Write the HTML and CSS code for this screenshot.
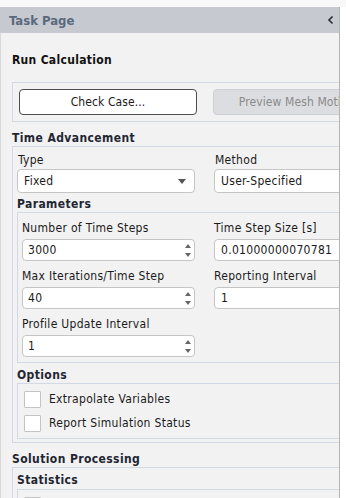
FILE: index.html
```
<!DOCTYPE html>
<html lang="en">

<head>
    <meta charset="UTF-8">
    <meta name="viewport" content="width=device-width, initial-scale=1.0">
    <title>Task Page</title>

    <link rel="stylesheet" href="styles.css">
</head>

<body>

    <div class="top-strip"></div>

    <div class="task-panel">
        <!-- Panel Header -->
        <div class="panel-head">
            <span class="panel-head-title">Task Page</span>
            <svg class="collapse-icon" width="8" height="10" viewBox="0 0 8 10">
                <polyline points="5.5,1.5 2,5 5.5,8.5" fill="none" stroke="#2b2b2b" stroke-width="1.6" />
            </svg>
        </div>

        <div class="panel-body">
            <div class="panel-inner">
                <h2 class="page-title">Run Calculation</h2>

                <!-- Top Buttons -->
                <div class="btn-group">
                    <button class="btn">Check Case...</button>
                    <button class="btn btn-disabled">Preview Mesh Motion...</button>
                </div>

                <!-- Time Advancement -->
                <h3 class="group-title">Time Advancement</h3>
                <div class="group time-group">
                    <div class="two-col">
                        <div class="field">
                            <label>Type</label>
                            <div class="select">
                                <span>Fixed</span>
                                <svg width="8" height="5" viewBox="0 0 8 5"><polygon points="0,0 8,0 4,5" fill="#555" /></svg>
                            </div>
                        </div>
                        <div class="field">
                            <label>Method</label>
                            <div class="select">
                                <span>User-Specified</span>
                                <svg width="8" height="5" viewBox="0 0 8 5"><polygon points="0,0 8,0 4,5" fill="#555" /></svg>
                            </div>
                        </div>
                    </div>

                    <h4 class="sub-title">Parameters</h4>
                    <div class="group params-group">
                        <div class="field">
                            <label>Number of Time Steps</label>
                            <div class="input spin"><span>3000</span><span class="spin-arrows"></span></div>
                        </div>
                        <div class="field">
                            <label>Time Step Size [s]</label>
                            <div class="input"><span>0.01000000070781</span></div>
                        </div>
                        <div class="field">
                            <label>Max Iterations/Time Step</label>
                            <div class="input spin"><span>40</span><span class="spin-arrows"></span></div>
                        </div>
                        <div class="field">
                            <label>Reporting Interval</label>
                            <div class="input"><span>1</span></div>
                        </div>
                        <div class="field">
                            <label>Profile Update Interval</label>
                            <div class="input spin"><span>1</span><span class="spin-arrows"></span></div>
                        </div>
                    </div>

                    <h4 class="sub-title options-title">Options</h4>
                    <div class="group check-group">
                        <div class="check-row"><span class="checkbox"></span>Extrapolate Variables</div>
                        <div class="check-row"><span class="checkbox"></span>Report Simulation Status</div>
                    </div>
                </div>

                <!-- Solution Processing -->
                <h3 class="group-title">Solution Processing</h3>
                <div class="group solution-group">
                    <h4 class="sub-title stats-title">Statistics</h4>
                    <div class="group check-group">
                        <div class="check-row"><span class="checkbox"></span>Data Sampling for Time Statistics</div>
                    </div>
                </div>
            </div>
        </div>
    </div>

</body>

</html>
```

FILE: styles.css
```
/* General Styling */
body {
    margin: 0;
    background-color: #ffffff;
    font-family: "DejaVu Sans Condensed", "DejaVu Sans", sans-serif;
    font-size: 12px;
    letter-spacing: 0.3px;
    color: #1a1a1a;
}

.top-strip {
    height: 7px;
    background-color: #f8f8f8;
}

/* Task Panel */
.task-panel {
    width: 339px;
    height: 491px;
    border-right: 1px solid #b4b4b4;
    background-color: #f2f2f2;
    overflow: hidden;
}

.panel-head {
    height: 26px;
    background-color: #c6cad0;
    display: flex;
    align-items: center;
    justify-content: space-between;
    padding: 0 4px 0 9px;
}

.panel-head-title {
    font-weight: bold;
    font-size: 13px;
    letter-spacing: 0;
    color: #5a697d;
}

.panel-body {
    border-left: 1px solid #d9d9d9;
    padding: 19px 0 0 11px;
    height: 100%;
}

.panel-inner {
    width: 430px;
}

/* Titles */
.page-title {
    margin: 0 0 14px;
    font-size: 12px;
    line-height: 16px;
    font-weight: bold;
    color: #111111;
}

.group-title,
.sub-title {
    margin: 0;
    font-size: 12px;
    line-height: 15px;
    font-weight: bold;
    letter-spacing: 0.4px;
    color: #1f2632;
}

.group-title {
    margin-top: 9px;
}

.sub-title {
    margin-top: 4px;
}

.options-title {
    margin-top: 5px;
}

/* Group boxes */
.group {
    border: 1px solid #d3d9e4;
}

.btn-group {
    border: 1px solid #d3d9e4;
    padding: 6px;
    display: flex;
    gap: 16px;
}

.time-group {
    padding: 6px 4px 3px 4px;
}

.solution-group {
    padding: 5px 4px 3px 4px;
}

.stats-title {
    margin-top: 0;
    margin-bottom: 1px;
}

/* Buttons */
.btn {
    width: 178px;
    height: 26px;
    border: 1px solid #4d4d4d;
    border-radius: 4px;
    background-color: #ffffff;
    font-family: inherit;
    font-size: 12px;
    letter-spacing: 0.1px;
    color: #1a1a1a;
    padding: 0;
}

.btn-disabled {
    border-color: #cdd0d4;
    background-color: #dcdde0;
    color: #8a8a8a;
}

/* Fields */
.two-col {
    display: grid;
    grid-template-columns: 178px 178px;
    column-gap: 19px;
}

.field label {
    display: block;
    padding-left: 1px;
    line-height: 14px;
    margin-bottom: 2px;
}

.select {
    height: 24px;
    box-sizing: border-box;
    border: 1px solid #c5c5c5;
    border-radius: 4px;
    background-color: #ffffff;
    display: flex;
    align-items: center;
    justify-content: space-between;
    padding: 0 8px 0 6px;
}

.params-group {
    padding: 8px 4px 5px 4px;
    display: grid;
    grid-template-columns: 173px 178px;
    column-gap: 19px;
    row-gap: 8px;
}

.params-group .field label {
    padding-left: 0;
    margin-bottom: 4px;
}

.input {
    height: 22px;
    box-sizing: border-box;
    border: 1px solid #c5c5c5;
    border-radius: 4px;
    background-color: #ffffff;
    display: flex;
    align-items: center;
    justify-content: space-between;
    padding: 0 1px 0 6px;
}

.spin {
    padding-left: 5px;
}

/* Spinner arrows */
.spin-arrows {
    width: 9px;
    height: 14px;
    position: relative;
}

.spin-arrows::before,
.spin-arrows::after {
    content: "";
    position: absolute;
    left: 1px;
    border-left: 3.5px solid transparent;
    border-right: 3.5px solid transparent;
}

.spin-arrows::before {
    top: 1px;
    border-bottom: 4px solid #666;
}

.spin-arrows::after {
    bottom: 0;
    border-top: 4px solid #666;
}

/* Checkboxes */
.check-group {
    padding: 7px 6px 6px 6px;
    display: flex;
    flex-direction: column;
    gap: 7px;
}

.check-row {
    display: flex;
    align-items: center;
    gap: 8px;
    line-height: 17px;
}

.checkbox {
    width: 17px;
    height: 17px;
    box-sizing: border-box;
    border: 1px solid #c4c4c4;
    border-radius: 1px;
    background-color: #ffffff;
}
```
